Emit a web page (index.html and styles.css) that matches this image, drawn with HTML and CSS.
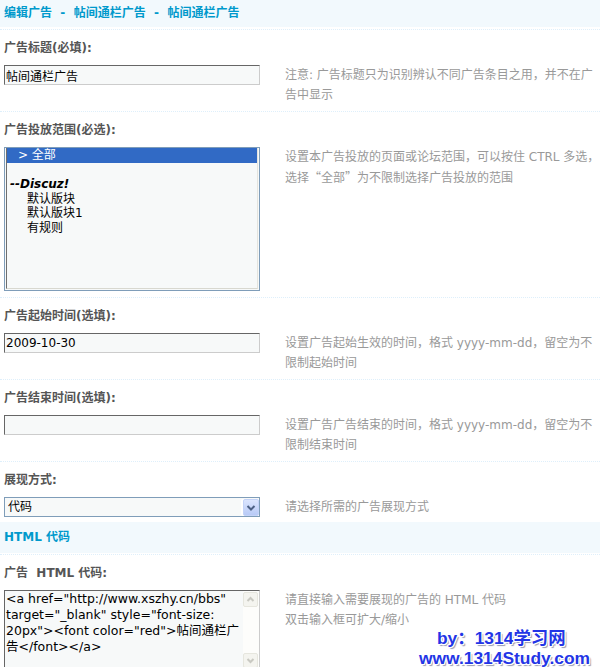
FILE: index.html
```html
<!DOCTYPE html>
<html lang="zh-CN">
<head>
<meta charset="utf-8">
<title>编辑广告</title>
<link rel="stylesheet" href="styles.css">
</head>
<body>
<div class="page">
  <div class="section section-top">编辑广告&nbsp; - &nbsp;帖间通栏广告&nbsp; - &nbsp;帖间通栏广告</div>

  <div class="row">
    <div class="label">广告标题(必填):</div>
    <div class="field">
      <div class="ctrl"><input class="txt" type="text" value="帖间通栏广告"></div>
      <div class="tips">注意: 广告标题只为识别辨认不同广告条目之用，并不在广<br>告中显示</div>
    </div>
  </div>

  <div class="row">
    <div class="label">广告投放范围(必选):</div>
    <div class="field">
      <div class="ctrl">
        <div class="multi">
          <div class="multi-inner">
            <div class="opt opt-sel">&gt; 全部</div>
            <div class="opt"></div>
            <div class="opt opt-group">--Discuz!</div>
            <div class="opt opt-child">默认版块</div>
            <div class="opt opt-child">默认版块1</div>
            <div class="opt opt-child">有规则</div>
          </div>
        </div>
      </div>
      <div class="tips">设置本广告投放的页面或论坛范围，可以按住 CTRL 多选，<br>选择<span class="cjk">“全部”</span>为不限制选择广告投放的范围</div>
    </div>
  </div>

  <div class="row">
    <div class="label">广告起始时间(选填):</div>
    <div class="field">
      <div class="ctrl"><input class="txt" type="text" value="2009-10-30"></div>
      <div class="tips">设置广告起始生效的时间，格式 yyyy-mm-dd，留空为不<br>限制起始时间</div>
    </div>
  </div>

  <div class="row">
    <div class="label">广告结束时间(选填):</div>
    <div class="field">
      <div class="ctrl"><input class="txt" type="text" value=""></div>
      <div class="tips">设置广告广告结束的时间，格式 yyyy-mm-dd，留空为不<br>限制结束时间</div>
    </div>
  </div>

  <div class="row row-tight">
    <div class="label">展现方式:</div>
    <div class="field">
      <div class="ctrl">
        <div class="select">
          <span class="select-value">代码</span>
          <span class="select-btn">
            <svg width="14" height="14" viewBox="0 0 14 14"><path d="M3.5 5 L7 8.5 L10.5 5" fill="none" stroke="#4d6185" stroke-width="2"/></svg>
          </span>
        </div>
      </div>
      <div class="tips">请选择所需的广告展现方式</div>
    </div>
  </div>

  <div class="section section-mid">HTML 代码</div>

  <div class="row">
    <div class="label">广告&nbsp; HTML 代码:</div>
    <div class="field">
      <div class="ctrl">
        <div class="area">
          <div class="area-text">&lt;a href="http://www.xszhy.cn/bbs"
target="_blank" style="font-size:
20px"&gt;&lt;font color="red"&gt;帖间通栏广
告&lt;/font&gt;&lt;/a&gt;</div>
          <div class="scroll">
            <span class="scroll-btn">
              <svg width="13" height="13" viewBox="0 0 13 13"><path d="M3.5 8 L6.5 5 L9.5 8" fill="none" stroke="#c9c9c2" stroke-width="2"/></svg>
            </span>
            <span class="scroll-btn">
              <svg width="13" height="13" viewBox="0 0 13 13"><path d="M3.5 5 L6.5 8 L9.5 5" fill="none" stroke="#c9c9c2" stroke-width="2"/></svg>
            </span>
          </div>
        </div>
      </div>
      <div class="tips">请直接输入需要展现的广告的 HTML 代码<br>双击输入框可扩大/缩小</div>
    </div>
  </div>

  <div class="watermark">
    <div class="wm-line1">by<span class="wm-cjk">：</span>1314<span class="wm-cjk">学习网</span></div>
    <div class="wm-line2">www.1314Study.com</div>
  </div>
</div>
</body>
</html>
```

FILE: styles.css
```css
html {
  overflow: hidden;
}

body {
  margin: 0;
  background: #fff;
  color: #000;
  font: 12px "DejaVu Sans", "Noto Sans CJK SC", sans-serif;
}

.page {
  position: relative;
  width: 600px;
}

.section {
  background: #f2f9fd;
  color: #0099cc;
  font-weight: bold;
  padding-left: 4px;
}

.section-top {
  height: 27px;
  line-height: 27px;
  margin-bottom: 2px;
}

.section-mid {
  height: 31px;
  line-height: 31px;
  margin-bottom: 1px;
}

.row {
  border-top: 1px dotted #deeffb;
  padding: 8px 0 6px 4px;
}

.row-tight {
  padding-bottom: 5px;
}

.label {
  font-weight: bold;
  color: #555;
  line-height: 20px;
  margin-bottom: 7px;
}

.field {
  display: flex;
  align-items: flex-start;
}

.ctrl {
  width: 281px;
  flex: none;
}

.tips {
  color: #999;
  line-height: 20px;
  white-space: nowrap;
}

.cjk {
  font-family: "Noto Sans CJK SC", sans-serif;
}

.txt {
  display: block;
  box-sizing: border-box;
  width: 256px;
  height: 20px;
  margin: 0;
  padding: 0 1px;
  border: 1px solid;
  border-color: #666 #ccc #ccc #666;
  background: #f7f9f9;
  color: #000;
  font: 12px "DejaVu Sans", "Noto Sans CJK SC", sans-serif;
  outline: none;
}

/* multi select */
.multi {
  box-sizing: border-box;
  width: 256px;
  height: 144px;
  border: 1px solid #7f9db9;
  padding: 0 1px 1px 1px;
  background: #f7f9f9;
}

.multi-inner {
  box-sizing: border-box;
  height: 100%;
  border-left: 1px solid #6f6f6f;
  border-bottom: 1px solid #d8d8d0;
  border-right: 1px solid #e4e4de;
}

.opt {
  height: 14.5px;
  line-height: 14.5px;
  white-space: pre;
  color: #000;
}

.opt-sel {
  background: #316ac5;
  color: #fff;
  padding-left: 11px;
}

.opt-group {
  font-weight: bold;
  font-style: italic;
  padding-left: 3px;
}

.opt-child {
  padding-left: 20px;
}

/* dropdown */
.select {
  box-sizing: border-box;
  width: 256px;
  height: 20px;
  border: 1px solid #7f9db9;
  background: #f7f9f9;
  display: flex;
  align-items: center;
}

.select-value {
  flex: 1;
  padding-left: 3px;
  line-height: 18px;
}

.select-btn {
  box-sizing: border-box;
  width: 16px;
  height: 17px;
  margin-top: 1px;
  border: 1px solid #c4d3f8;
  border-radius: 2px;
  background: linear-gradient(#dbe5fe, #b8caf6);
  box-shadow: -2px 0 0 #fff;
  display: flex;
  align-items: center;
  justify-content: center;
}

/* textarea */
.area {
  box-sizing: border-box;
  width: 256px;
  height: 80px;
  border: 1px solid;
  border-color: #666 #ccc #ccc #666;
  background: #f7f9f9;
  display: flex;
}

.area-text {
  flex: 1;
  padding: 0 1px;
  font-size: 12.5px;
  line-height: 16px;
  white-space: pre;
  overflow: hidden;
  color: #000;
}

.scroll {
  width: 16px;
  flex: none;
  background: #fdfdfb;
  display: flex;
  flex-direction: column;
  justify-content: space-between;
  padding: 1px 0;
}

.scroll-btn {
  box-sizing: border-box;
  width: 15px;
  height: 15px;
  border: 1px solid #e6e6de;
  border-radius: 2px;
  background: #f4f4ef;
  display: flex;
  align-items: center;
  justify-content: center;
}

/* watermark */
.watermark {
  position: absolute;
  left: 419px;
  top: 627px;
  font: bold 17.4px "Liberation Sans", "Noto Sans CJK SC", sans-serif;
  line-height: 20px;
  color: #2335e6;
  white-space: nowrap;
  text-shadow: 1px 0 0 #fff, -1px 0 0 #fff, 0 1px 0 #fff, 0 -1px 0 #fff,
    1px 1px 0 #fff, -1px -1px 0 #fff, 1px -1px 0 #fff, -1px 1px 0 #fff,
    2px 2px 1px #9a9ab0;
}

.wm-line1 {
  padding-left: 18px;
}

.wm-cjk {
  font-family: "Noto Sans CJK SC", sans-serif;
  font-weight: bold;
}
```
